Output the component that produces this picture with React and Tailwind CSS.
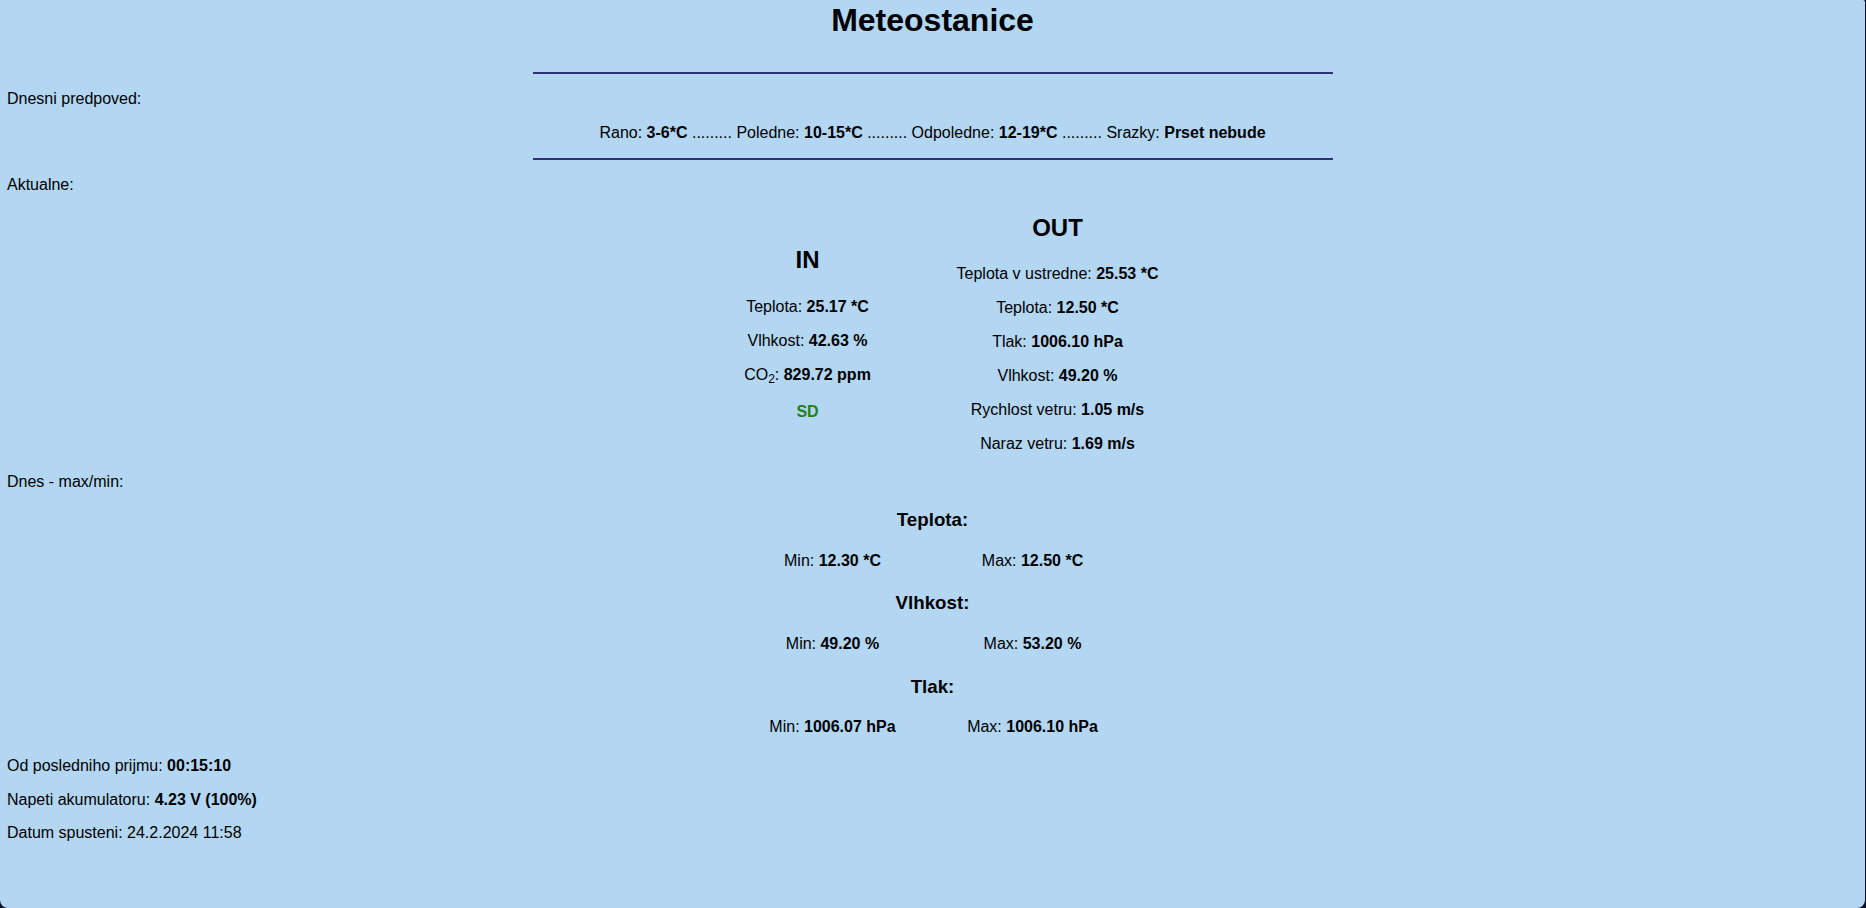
export default function App() {
  const dots = " ......... ";
  return (
    <div className="w-full min-h-[908px] bg-[#0c0f24] font-['Liberation_Sans',Arial,sans-serif] text-black">
      <div className="w-[1865px] h-[908px] bg-[#b3d6f3] rounded-b-[8px] rounded-tr-[2px] flex flex-col text-[16px] leading-[18px]">
        <h1 className="mt-[2px] text-center text-[32px] leading-[37px] font-bold">Meteostanice</h1>
        <div className="mt-[33px] h-[2px] w-[800px] self-center bg-[#2e3379]" />
        <p className="mt-[16px] pl-[7px]">Dnesni predpoved:</p>
        <p className="mt-[16px] text-center whitespace-pre">
          Rano: <b>3-6*C</b>{dots}Poledne: <b>10-15*C</b>{dots}Odpoledne: <b>12-19*C</b>{dots}Srazky: <b>Prset nebude</b>
        </p>
        <div className="mt-[16px] h-[2px] w-[800px] self-center bg-[#2e3379]" />
        <p className="mt-[16px] pl-[7px]">Aktualne:</p>

        <div className="mt-[20px] self-center grid grid-cols-[250px_250px] items-center">
          <div className="flex flex-col items-center">
            <h2 className="text-[24px] leading-[28px] font-bold">IN</h2>
            <p className="mt-[24px]">Teplota: <b>25.17 *C</b></p>
            <p className="mt-[16px]">Vlhkost: <b>42.63 %</b></p>
            <p className="mt-[16px]">CO<sub>2</sub>: <b>829.72 ppm</b></p>
            <p className="mt-[19px] font-bold text-[#23801a]">SD</p>
          </div>
          <div className="flex flex-col items-center">
            <h2 className="text-[24px] leading-[28px] font-bold">OUT</h2>
            <p className="mt-[23px]">Teplota v ustredne: <b>25.53 *C</b></p>
            <p className="mt-[16px]">Teplota: <b>12.50 *C</b></p>
            <p className="mt-[16px]">Tlak: <b>1006.10 hPa</b></p>
            <p className="mt-[16px]">Vlhkost: <b>49.20 %</b></p>
            <p className="mt-[16px]">Rychlost vetru: <b>1.05 m/s</b></p>
            <p className="mt-[16px]">Naraz vetru: <b>1.69 m/s</b></p>
          </div>
        </div>

        <p className="mt-[20px] pl-[7px]">Dnes - max/min:</p>

        <h3 className="mt-[18px] text-center text-[18.72px] leading-[22px] font-bold">Teplota:</h3>
        <div className="mt-[21px] self-center grid grid-cols-[200px_200px] text-center">
          <p>Min: <b>12.30 *C</b></p>
          <p>Max: <b>12.50 *C</b></p>
        </div>
        <h3 className="mt-[22px] text-center text-[18.72px] leading-[22px] font-bold">Vlhkost:</h3>
        <div className="mt-[21px] self-center grid grid-cols-[200px_200px] text-center">
          <p>Min: <b>49.20 %</b></p>
          <p>Max: <b>53.20 %</b></p>
        </div>
        <h3 className="mt-[23px] text-center text-[18.72px] leading-[22px] font-bold">Tlak:</h3>
        <div className="mt-[20px] self-center grid grid-cols-[200px_200px] text-center">
          <p>Min: <b>1006.07 hPa</b></p>
          <p>Max: <b>1006.10 hPa</b></p>
        </div>

        <p className="mt-[21px] pl-[7px]">Od posledniho prijmu: <b>00:15:10</b></p>
        <p className="mt-[16px] pl-[7px]">Napeti akumulatoru: <b>4.23 V (100%)</b></p>
        <p className="mt-[15px] pl-[7px]">Datum spusteni: 24.2.2024 11:58</p>
      </div>
    </div>
  );
}
